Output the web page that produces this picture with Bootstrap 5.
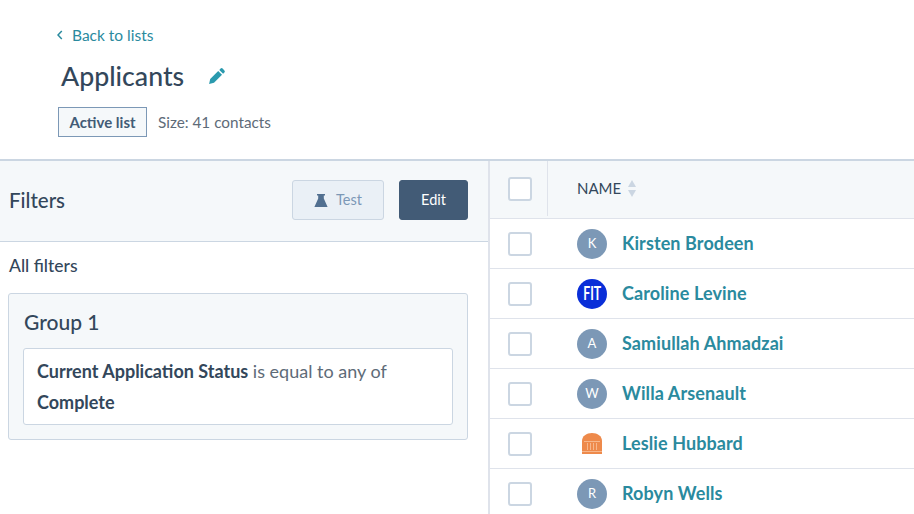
<!DOCTYPE html>
<html lang="en">
<head>
  <meta charset="UTF-8">
  <title>Applicants</title>
  <link href="https://cdn.jsdelivr.net/npm/bootstrap@5.3.0/dist/css/bootstrap.min.css" rel="stylesheet">
  <style>
    html, body { height: 514px; overflow: hidden; }
    body { font-family: "Lato", "Open Sans", sans-serif; color: #33475b; background: #fff; }
    .page-top { height: 161px; padding: 22px 0 0 57px; border-bottom: 2px solid #cbd6e2; }
    .back-link { color: #2a8a9e; font-size: 15.5px; line-height: 20px; text-decoration: none; }
    .back-link svg { margin-right: 9px; }
    .title-row { margin: 10px 0 0 4px; height: 40px; }
    .title-row h1 { font-size: 26.700px; line-height: 40px; margin: 0 24px 0 0; font-weight: 500; color: #33475b; }
    .tag-row { margin: 11px 0 0 1px; }
    .list-tag { width: 89px; height: 30px; border: 1px solid #7c98b6; background: #f5f8fa; font-size: 15px; font-weight: 700; color: #425b76; }
    .size-text { font-size: 15.3px; color: #5e6b78; margin-left: 11px; }
    .split { height: 353px; }
    .left-pane { width: 490px; flex: none; border-right: 2px solid #dfe3eb; }
    .filter-head { height: 81px; background: #f5f8fa; border-bottom: 1px solid #cbd6e2; padding: 0 20px 2px 9px; }
    .filter-head h2 { font-size: 20.500px; font-weight: 500; margin: 0; color: #33475b; }
    .btn-test { width: 92px; height: 40px; background: #eaf0f6; border: 1px solid #cbd6e2; color: #7c98b6; font-size: 14.5px; border-radius: 3px; }
    .btn-edit { width: 69px; height: 40px; background: #425b76; border: 1px solid #425b76; color: #fff; font-size: 14.5px; border-radius: 3px; margin-left: 15px; }
    .filter-body { padding: 13px 20px 0 8px; }
    .filter-label { font-size: 17.500px; line-height: 22px; font-weight: 500; padding-left: 1px; margin-bottom: 16px; }
    .group-box { height: 147px; background: #f5f8fa; border: 1px solid #cbd6e2; border-radius: 3px; padding: 13px 14px 14px; }
    .group-box h3 { font-size: 21px; line-height: 30px; font-weight: 500; margin: 0 0 11px; padding-left: 1px; }
    .rule-box { height: 77px; background: #fff; border: 1px solid #cbd6e2; border-radius: 3px; padding: 7px 13px; font-size: 18px; line-height: 31px; color: #5e6b78; }
    .rule-box strong { color: #33475b; font-weight: 700; }
    .right-pane { flex: 1; min-width: 0; }
    .head-row { height: 58px; padding-bottom: 2px; background: #f5f8fa; border-bottom: 1px solid #dfe3eb; }
    .check-cell { width: 58px; flex: none; height: 100%; }
    .head-row .check-cell { border-right: 1px solid #dfe3eb; }
    .box-check { width: 24px; height: 24px; margin-left: 18px; background: #fff; border: 2px solid #cbd6e2; border-radius: 3px; }
    .name-head { margin-left: 29px; font-size: 15px; color: #33475b; }
    .sort-arrows { margin-left: 6px; }
    .person-row { height: 50px; border-bottom: 1px solid #dfe3eb; }
    .avatar-circle { width: 30px; height: 30px; margin-left: 29px; flex: none; border-radius: 50%; background: #7c98b6; color: #fff; font-size: 13px; }
    .avatar-fit { background: #0a2fd8; font-size: 18px; font-weight: 700; }
    .avatar-fit span { display: inline-block; transform: scaleX(.68); }
    .avatar-logo { background: transparent; }
    .person-link { margin-left: 15px; font-size: 18px; letter-spacing: .1px; font-weight: 700; color: #2a8a9e; text-decoration: none; white-space: nowrap; }
  </style>
</head>
<body>

<div class="page-top">
  <a href="#" class="back-link d-inline-flex align-items-center">
    <svg width="6" height="10" viewBox="0 0 6 10"><path d="M4.8 1 1 5l3.8 4" fill="none" stroke="#2a8a9e" stroke-width="1.5"/></svg>
    Back to lists
  </a>
  <div class="title-row d-flex align-items-center">
    <h1>Applicants</h1>
    <svg width="18" height="18" viewBox="0 0 18 18"><path d="M12.600 1.600a1.400 1.400 0 0 1 2 0l1.800 1.800a1.400 1.400 0 0 1 0 2l-1.300 1.300-3.800-3.800zM10.200 3.900 14 7.700l-8 8-4.900 1.200L2.200 12z" fill="#2a9aae"/></svg>
  </div>
  <div class="tag-row d-flex align-items-center">
    <span class="list-tag d-flex align-items-center justify-content-center">Active list</span>
    <span class="size-text">Size: 41 contacts</span>
  </div>
</div>

<div class="split d-flex">
  <div class="left-pane">
    <div class="filter-head d-flex align-items-center">
      <h2 class="me-auto">Filters</h2>
      <button type="button" class="btn btn-test d-flex align-items-center justify-content-center gap-2 p-0">
        <svg width="14" height="13" viewBox="0 0 14 13"><path d="M3 0h8v1.500H9.800v3L13.600 13H.4l3.800-8.500v-3H3z" fill="#516f90"/></svg>
        Test
      </button>
      <button type="button" class="btn btn-edit p-0">Edit</button>
    </div>
    <div class="filter-body">
      <div class="filter-label">All filters</div>
      <div class="group-box">
        <h3>Group 1</h3>
        <div class="rule-box">
          <strong>Current Application Status</strong> is equal to any of<br>
          <strong>Complete</strong>
        </div>
      </div>
    </div>
  </div>

  <div class="right-pane">
    <div class="head-row d-flex align-items-center">
      <div class="check-cell d-flex align-items-center"><span class="box-check"></span></div>
      <span class="name-head">NAME</span>
      <svg class="sort-arrows" width="10" height="19" viewBox="0 0 10 19"><path d="M5 1l4 7H1z" fill="#cbd6e2"/><path d="M5 18l4-7H1z" fill="#cbd6e2"/></svg>
    </div>
    <div class="person-row d-flex align-items-center">
      <div class="check-cell d-flex align-items-center"><span class="box-check"></span></div>
      <span class="avatar-circle d-flex align-items-center justify-content-center">K</span>
      <a href="#" class="person-link">Kirsten Brodeen</a>
    </div>
    <div class="person-row d-flex align-items-center">
      <div class="check-cell d-flex align-items-center"><span class="box-check"></span></div>
      <span class="avatar-circle avatar-fit d-flex align-items-center justify-content-center"><span>FIT</span></span>
      <a href="#" class="person-link">Caroline Levine</a>
    </div>
    <div class="person-row d-flex align-items-center">
      <div class="check-cell d-flex align-items-center"><span class="box-check"></span></div>
      <span class="avatar-circle d-flex align-items-center justify-content-center">A</span>
      <a href="#" class="person-link">Samiullah Ahmadzai</a>
    </div>
    <div class="person-row d-flex align-items-center">
      <div class="check-cell d-flex align-items-center"><span class="box-check"></span></div>
      <span class="avatar-circle d-flex align-items-center justify-content-center">W</span>
      <a href="#" class="person-link">Willa Arsenault</a>
    </div>
    <div class="person-row d-flex align-items-center">
      <div class="check-cell d-flex align-items-center"><span class="box-check"></span></div>
      <span class="avatar-circle avatar-logo d-flex align-items-center justify-content-center">
        <svg width="22" height="23" viewBox="0 0 22 23">
          <path d="M1 22V9C1 4 5.500 1 11 1s10 3 10 8v13z" fill="#ee8a4b"/>
          <path d="M3 9.500h16M6.500 11v7M9.500 11v7M12.500 11v7M15.500 11v7M1 19.500h20" stroke="#f6b78c" stroke-width="1" fill="none"/>
        </svg>
      </span>
      <a href="#" class="person-link">Leslie Hubbard</a>
    </div>
    <div class="person-row d-flex align-items-center">
      <div class="check-cell d-flex align-items-center"><span class="box-check"></span></div>
      <span class="avatar-circle d-flex align-items-center justify-content-center">R</span>
      <a href="#" class="person-link">Robyn Wells</a>
    </div>
  </div>
</div>

<script src="https://cdn.jsdelivr.net/npm/bootstrap@5.3.0/dist/js/bootstrap.bundle.min.js"></script>
</body>
</html>
